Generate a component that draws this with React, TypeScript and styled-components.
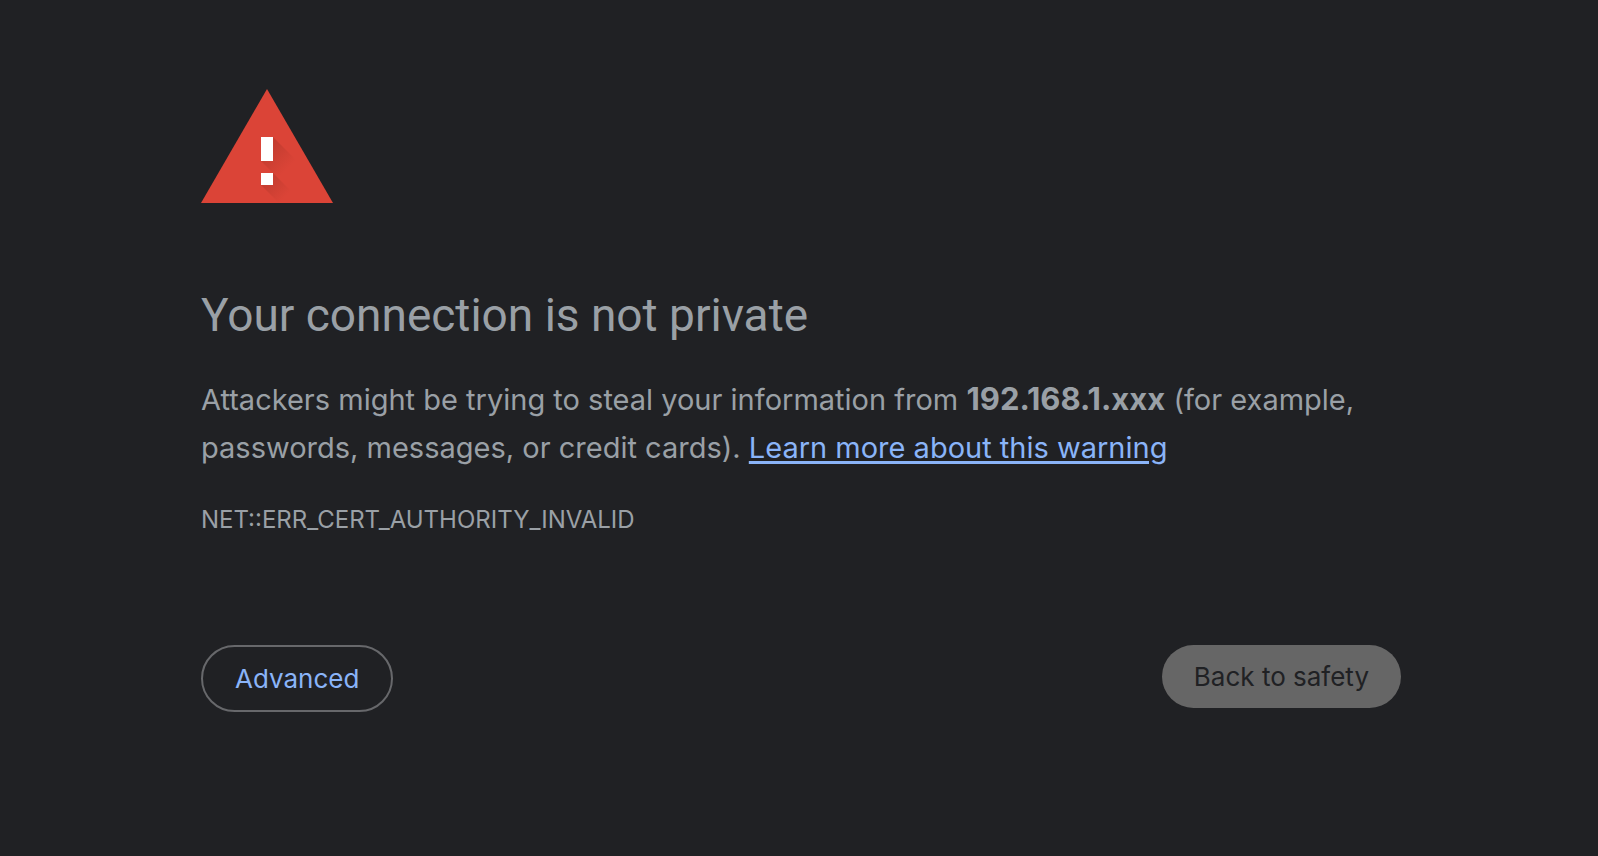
import React from "react";
import styled, { createGlobalStyle } from "styled-components";

const GlobalStyle = createGlobalStyle`
  body {
    margin: 0;
    background: #202124;
    color: #9aa0a6;
    font-family: Inter, "Liberation Sans", sans-serif;
  }
`;

const Page = styled.main`
  max-width: 1200px;
  margin: 0 auto;
  padding: 89px 0 40px 4px;
`;

const WarningIcon = styled.svg`
  display: block;
  width: 132px;
  height: 114px;
`;

const Title = styled.h1`
  margin: 82px 0 30px;
  font-family: Roboto, "Liberation Sans", sans-serif;
  font-size: 46px;
  line-height: 60px;
  font-weight: 400;
`;

const Message = styled.p`
  margin: 0;
  font-size: 29px;
  line-height: 48px;
`;

const Host = styled.strong`
  font-size: 31px;
  font-weight: 700;
`;

const HelpLink = styled.a`
  color: #8ab4f8;
  text-decoration-thickness: 3px;
  text-underline-offset: 3px;
`;

const ErrorCode = styled.p`
  margin: 32px 0 0;
  font-size: 24px;
  line-height: 32px;
`;

const Actions = styled.div`
  display: flex;
  justify-content: space-between;
  align-items: flex-start;
  margin-top: 109px;
`;

const Button = styled.button<{ $primary?: boolean }>`
  box-sizing: border-box;
  height: ${(p) => (p.$primary ? 63 : 67)}px;
  padding: 0 32px;
  border: ${(p) => (p.$primary ? "0" : "2px solid #67686b")};
  border-radius: 34px;
  background: ${(p) => (p.$primary ? "#666666" : "transparent")};
  color: ${(p) => (p.$primary ? "#202124" : "#8ab4f8")};
  font-family: inherit;
  font-size: 26px;
  cursor: pointer;
`;

export default function App() {
  return (
    <>
      <GlobalStyle />
      <Page>
        <WarningIcon viewBox="0 0 132 114" aria-hidden="true">
          <defs>
            <linearGradient id="barShade" gradientUnits="userSpaceOnUse" x1="66" y1="60" x2="86" y2="80">
              <stop offset="0" stopColor="#8c2b20" stopOpacity="0.3" />
              <stop offset="1" stopColor="#8c2b20" stopOpacity="0" />
            </linearGradient>
            <linearGradient id="dotShade" gradientUnits="userSpaceOnUse" x1="66" y1="90" x2="84" y2="108">
              <stop offset="0" stopColor="#8c2b20" stopOpacity="0.3" />
              <stop offset="1" stopColor="#8c2b20" stopOpacity="0" />
            </linearGradient>
          </defs>
          <path d="M66 0L132 114H0Z" fill="#db4437" />
          <path d="M72 48L100 76V112L60 72Z" fill="url(#barShade)" />
          <path d="M72 84L102 114H78L60 96Z" fill="url(#dotShade)" />
          <path d="M60 48H72V72H60ZM60 84H72V96H60Z" fill="#fff" />
        </WarningIcon>
        <Title>Your connection is not private</Title>
        <Message>
          Attackers might be trying to steal your information from <Host>192.168.1.xxx</Host> (for example,
          passwords, messages, or credit cards). <HelpLink href="#help">Learn more about this warning</HelpLink>
        </Message>
        <ErrorCode>NET::ERR_CERT_AUTHORITY_INVALID</ErrorCode>
        <Actions>
          <Button type="button">Advanced</Button>
          <Button type="button" $primary>Back to safety</Button>
        </Actions>
      </Page>
    </>
  );
}
